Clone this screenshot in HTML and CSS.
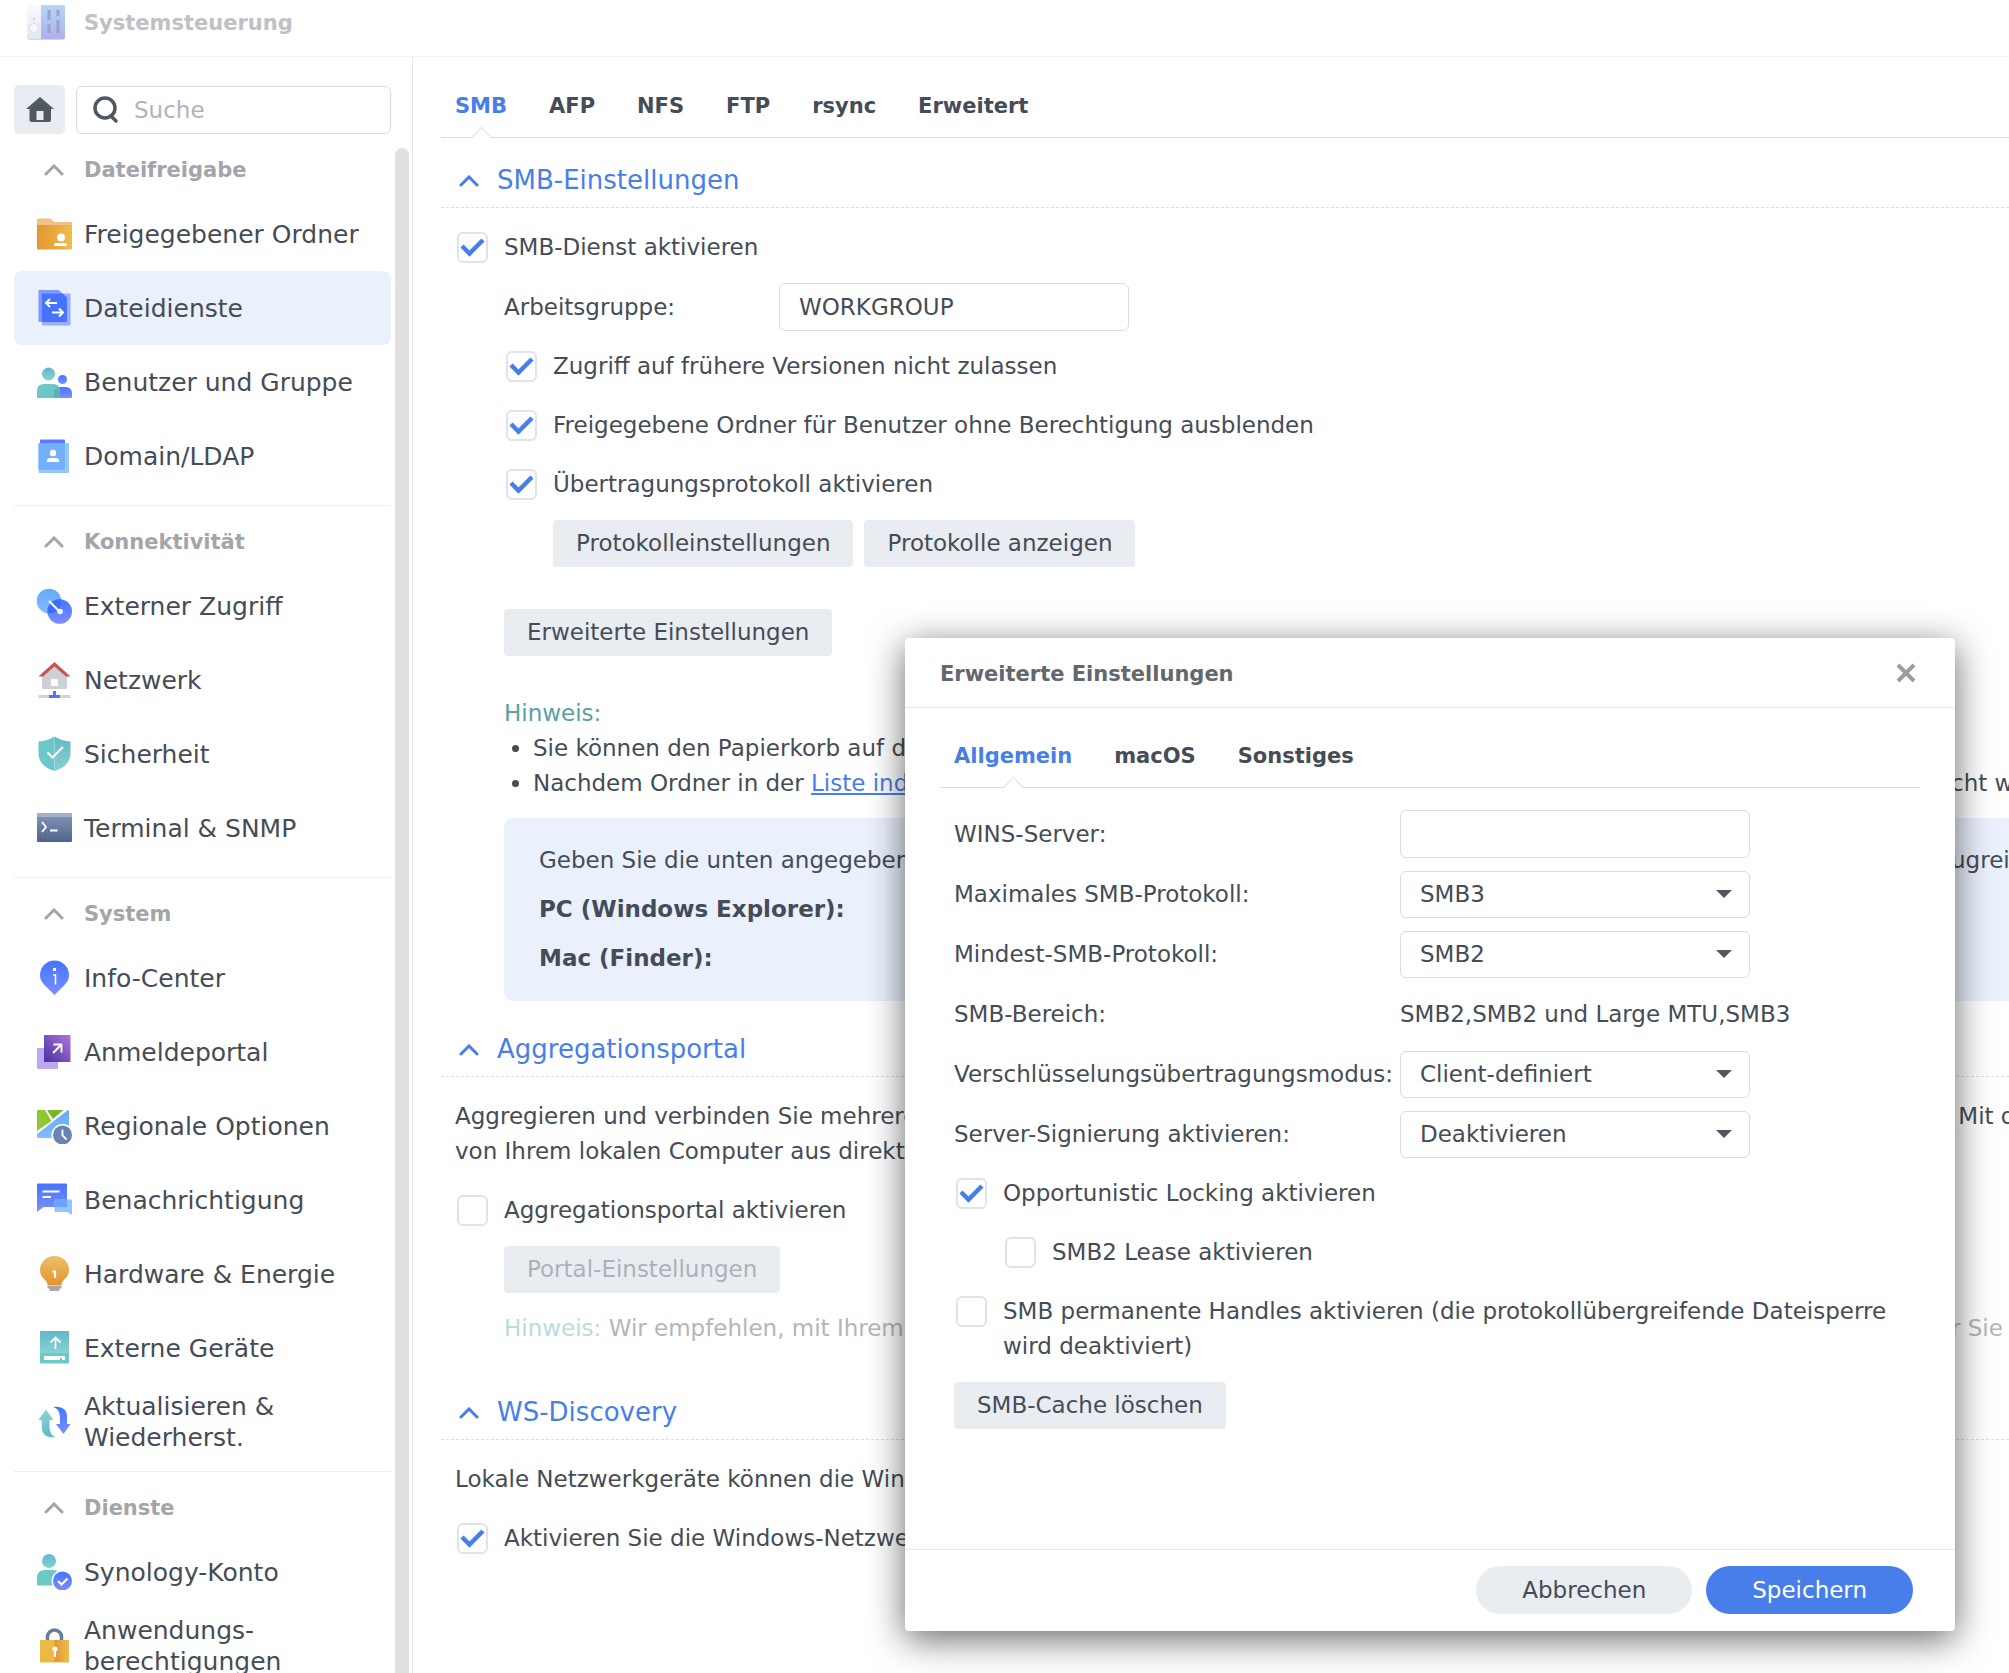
FILE: index.html
```html
<!DOCTYPE html>
<html lang="de">
<head>
    <meta charset="UTF-8">
    <meta name="viewport" content="width=device-width, initial-scale=1.0">
    <title>Systemsteuerung</title>
    <link rel="stylesheet" href="styles.css">
</head>
<body>
    <!-- shared gradients for the icons -->
    <svg class="defs" width="0" height="0" aria-hidden="true">
        <defs>
            <linearGradient id="blue" x1="0" y1="0" x2="0" y2="1"><stop offset="0" stop-color="#4674ff"/><stop offset="1" stop-color="#7b8fff"/></linearGradient>
            <linearGradient id="sky" x1="0" y1="0" x2="0" y2="1"><stop offset="0" stop-color="#64a8f8"/><stop offset="1" stop-color="#84bcff"/></linearGradient>
            <linearGradient id="teal" x1="0" y1="0" x2="0" y2="1"><stop offset="0" stop-color="#62b8c8"/><stop offset="1" stop-color="#86d2d0"/></linearGradient>
            <linearGradient id="tealUp" x1="0" y1="0" x2="0" y2="1"><stop offset="0" stop-color="#8ad5d0"/><stop offset="1" stop-color="#62b8c8"/></linearGradient>
            <linearGradient id="orange" x1="0" y1="0" x2="1" y2="0"><stop offset="0" stop-color="#e39632"/><stop offset="1" stop-color="#efbc4c"/></linearGradient>
            <linearGradient id="bulb" x1="0" y1="0" x2="0" y2="1"><stop offset="0" stop-color="#edc167"/><stop offset="1" stop-color="#e39230"/></linearGradient>
            <linearGradient id="slate" x1="0" y1="0" x2="0" y2="1"><stop offset="0" stop-color="#8697b9"/><stop offset="1" stop-color="#4e648a"/></linearGradient>
            <linearGradient id="purple" x1="0" y1="1" x2="1" y2="0"><stop offset="0" stop-color="#4530a8"/><stop offset="1" stop-color="#b077d4"/></linearGradient>
            <linearGradient id="panel" x1="0" y1="0" x2="0" y2="1"><stop offset="0" stop-color="#b4d6f3"/><stop offset="1" stop-color="#b0b0ee"/></linearGradient>
            <linearGradient id="knob" x1="0" y1="0" x2="0" y2="1"><stop offset="0" stop-color="#f9f9ff"/><stop offset="1" stop-color="#e6e6f0"/></linearGradient>
        </defs>
    </svg>

    <div class="app">
        <header class="titlebar">
            <svg class="app-icon" viewBox="0 0 38 36">
                <rect x="0" y="2" width="38" height="33" rx="3" fill="#d4d4de"/>
                <path d="M2 0h12v34H2a2 2 0 0 1-2-2V2a2 2 0 0 1 2-2z" fill="url(#knob)"/>
                <path d="M14 0h22a2 2 0 0 1 2 2v30a2 2 0 0 1-2 2H14z" fill="url(#panel)"/>
                <circle cx="7" cy="14" r="1" fill="#c3c3cf"/>
                <circle cx="7" cy="23" r="4.5" fill="#f7f7ff" stroke="#dedee9"/>
                <path d="M22 5v23M31 5v23" stroke="#98a2c6" stroke-width="3"/>
                <circle cx="22" cy="17" r="2.5" fill="#a9c6f2"/>
                <circle cx="31" cy="13" r="2.5" fill="#a9c6f2"/>
            </svg>
            <h1>Systemsteuerung</h1>
        </header>

        <div class="window">
            <aside class="sidebar">
                <div class="search-row">
                    <button type="button" class="home-btn" aria-label="Startseite">
                        <svg viewBox="0 0 28 26" width="28" height="26"><path fill-rule="evenodd" d="M14 0l14 12h-3v11a2 2 0 0 1-2 2H5.500a2 2 0 0 1-2-2V12H0zM10.500 14v9h7v-9z" fill="#505862"/></svg>
                    </button>
                    <div class="search-box">
                        <svg viewBox="0 0 26 28" width="26" height="28"><circle cx="12" cy="12" r="10" fill="none" stroke="#505862" stroke-width="3.500"/><path d="M18 20l5 5" stroke="#505862" stroke-width="3.500" stroke-linecap="round"/></svg>
                        <input type="search" class="search-input" placeholder="Suche" aria-label="Suche">
                    </div>
                </div>

                <div class="sidebar-body">
                    <nav class="menu">
                        <section class="menu-group">
                            <h2 class="menu-title"><span class="icon"><svg class="chevron" viewBox="0 0 20 12"><path d="M2 10l8-8 8 8"/></svg></span>Dateifreigabe</h2>
                            <a href="#" class="menu-item">
                                <svg class="icon" viewBox="0 0 36 36"><path d="M1 12V3.500Q1 2.500 2 2.500h12q1 0 2 1.500l2 2h17q1 0 1 1v5z" fill="#efc186"/><path d="M1 9h35v23.500q0 1-1 1H2q-1 0-1-1z" fill="url(#orange)"/><circle cx="25" cy="21.500" r="4" fill="#fff"/><path d="M18 30v-1q0-2 2-2h9q2 0 2 2v1z" fill="#fff"/></svg>
                                Freigegebener Ordner
                            </a>
                            <a href="#" class="menu-item active">
                                <svg class="icon" viewBox="0 0 36 36"><path d="M3.500 0h19l8.500 7v25H3.500q-1 0-1-1V1q0-1 1-1z" fill="#7f98fb"/><path d="M6 3.500h28q.5 0 .5 1V34q0 1.500-1 1.500H7q-1 0-1-1z" fill="#9cadfa"/><path d="M6 3.500h20.500L31 7.500v23.500q0 1-1 1H6z" fill="#4672fc"/><path d="M21 13H10m4-4l-4 4 4 4M16 22.500h11m-4-4l4 4-4 4" fill="none" stroke="#fff" stroke-width="2"/></svg>
                                Dateidienste
                            </a>
                            <a href="#" class="menu-item">
                                <svg class="icon" viewBox="0 0 36 36"><circle cx="12.500" cy="10" r="6.500" fill="url(#teal)"/><circle cx="26.500" cy="15.500" r="4.500" fill="url(#blue)"/><path d="M18 34v-5q0-6 6-6h5q7 0 7 7v3q0 1-1 1z" fill="url(#blue)"/><path d="M1 33v-6q0-7 7-7h9q7 0 7 7v7H2q-1 0-1-1z" fill="#6bc7c8"/><path d="M24 34v-11q-6 0-6 6v5z" fill="#5ab4b4"/></svg>
                                Benutzer und Gruppe
                            </a>
                            <a href="#" class="menu-item">
                                <svg class="icon" viewBox="0 0 36 36"><rect x="4" y="1.500" width="25" height="6" rx="1" fill="#5a7bff"/><rect x="2.500" y="5" width="30.500" height="30" rx="1" fill="#98c6fd"/><rect x="2.500" y="5" width="26.500" height="27" rx="1" fill="#73b1fc"/><circle cx="17" cy="15" r="3.200" fill="#fff"/><path d="M11 24v-1q0-3 3-3h6q3 0 3 3v1z" fill="#fff"/></svg>
                                Domain/LDAP
                            </a>
                        </section>

                        <section class="menu-group">
                            <h2 class="menu-title"><span class="icon"><svg class="chevron" viewBox="0 0 20 12"><path d="M2 10l8-8 8 8"/></svg></span>Konnektivität</h2>
                            <a href="#" class="menu-item">
                                <svg class="icon" viewBox="0 0 36 36"><circle cx="13" cy="13" r="12.300" fill="url(#sky)"/><circle cx="23.700" cy="23.500" r="12.300" fill="url(#blue)"/><path d="M11.700 20.500A12.300 12.300 0 0 1 25.300 11.300A12.300 12.300 0 0 1 11.500 25.200z" fill="#3f6df7"/><path d="M13 13l11 11" stroke="#fff" stroke-width="2"/><circle cx="24" cy="23.500" r="2.800" fill="#fff"/></svg>
                                Externer Zugriff
                            </a>
                            <a href="#" class="menu-item">
                                <svg class="icon" viewBox="0 0 36 36"><path d="M6 11L18.500 2 31 11v14.500q0 1.500-1.500 1.500h-22Q6 27 6 25.500z" fill="#cdd0d6"/><rect x="15" y="17" width="7" height="7" rx="1" fill="#fff"/><path d="M2.500 14.500L18.500 0l16 14.500h-4.500L18.500 4.500 7 14.500z" fill="#c4574b"/><rect x="2.500" y="33" width="32" height="3" fill="#d2d4dc"/><path d="M17 29h3v4h4v3H13v-3h4z" fill="#4f76fb"/></svg>
                                Netzwerk
                            </a>
                            <a href="#" class="menu-item">
                                <svg class="icon" viewBox="0 0 36 36"><path d="M18.500.5Q11 5 2.500 5.500V17c0 10 7 15 16 18z" fill="#6cc8c8"/><path d="M18.500.5Q26 5 34.500 5.500V17c0 10-7 15-16 18z" fill="url(#teal)"/><path d="M11.500 16.500l5 5L27 11" fill="none" stroke="#fff" stroke-width="2"/></svg>
                                Sicherheit
                            </a>
                            <a href="#" class="menu-item">
                                <svg class="icon" viewBox="0 0 36 36"><rect x="1" y="3" width="35" height="29" rx="1" fill="url(#slate)"/><path d="M1 7V4q0-1 1-1h33q1 0 1 1v3z" fill="#a2b0cc"/><path d="M6 12l4 5-4 5M14 20.500h7.500" fill="none" stroke="#fff" stroke-width="1.800"/></svg>
                                Terminal &amp; SNMP
                            </a>
                        </section>

                        <section class="menu-group">
                            <h2 class="menu-title"><span class="icon"><svg class="chevron" viewBox="0 0 20 12"><path d="M2 10l8-8 8 8"/></svg></span>System</h2>
                            <a href="#" class="menu-item">
                                <svg class="icon" viewBox="0 0 36 36"><path d="M18.500.5A14.500 14.500 0 0 1 33 15c0 6-3.500 9-7 12.500L18.500 35 11 27.500C7.500 24 4 21 4 15A14.500 14.500 0 0 1 18.500.5z" fill="url(#blue)"/><rect x="17" y="8" width="3" height="3" fill="#fff"/><path d="M17 15h2.500v9.500" fill="none" stroke="#fff" stroke-width="1.500"/></svg>
                                Info-Center
                            </a>
                            <a href="#" class="menu-item">
                                <svg class="icon" viewBox="0 0 36 36"><rect x="1" y="14" width="21" height="21" rx="1" fill="#bda8f2"/><rect x="8" y="1" width="26.500" height="27" rx="1" fill="url(#purple)"/><path d="M17 19l8-8M17.500 10.500h8v8" fill="none" stroke="#fff" stroke-width="1.800"/></svg>
                                Anmeldeportal
                            </a>
                            <a href="#" class="menu-item">
                                <svg class="icon" viewBox="0 0 36 36"><path d="M1 23V3q0-1 1-1h7l6.500 11z" fill="#8fc731"/><path d="M11 2h16.500L17 11z" fill="#77b52a"/><path d="M32 2q1 0 1 1v27H2q-1 0-1-1v-3z" fill="url(#sky)"/><circle cx="26.500" cy="27" r="11" fill="#fff"/><circle cx="26.500" cy="27" r="9.500" fill="#6884b2"/><path d="M26.500 21.500v6l4 4" fill="none" stroke="#fff" stroke-width="1.800"/></svg>
                                Regionale Optionen
                            </a>
                            <a href="#" class="menu-item">
                                <svg class="icon" viewBox="0 0 36 36"><path d="M2 1.500h28q1 0 1 1V25H7.500L1 30V2.500q0-1 1-1z" fill="url(#blue)"/><path d="M18.500 17.500h16.500q1 0 1 1V33l-5-3H19.500q-1 0-1-1z" fill="#93c4fd"/><path d="M18.500 17.500H31V25H18.500z" fill="#6ba4fb"/><path d="M6.500 9.500h17M6.500 15H15" stroke="#fff" stroke-width="1.800"/></svg>
                                Benachrichtigung
                            </a>
                            <a href="#" class="menu-item">
                                <svg class="icon" viewBox="0 0 36 36"><path d="M11.500 29.500v-1C11.500 24 4 22 4 14A14.500 14 0 0 1 33 14c0 8-7.500 10-7.500 14.500v1z" fill="url(#bulb)"/><path d="M11.500 30h14v2.500h-2V35h-10v-2.500h-2z" fill="#a4a9b2"/><path d="M16.500 15.500h2.500V22" fill="none" stroke="#fff" stroke-width="2.200"/></svg>
                                Hardware &amp; Energie
                            </a>
                            <a href="#" class="menu-item">
                                <svg class="icon" viewBox="0 0 36 36"><rect x="4" y="1" width="29" height="32.500" rx="1" fill="#6cc9c8"/><path d="M4 23V2q0-1 1-1h27q1 0 1 1v21z" fill="url(#teal)"/><path d="M19.500 19V7.500m-5 5l5-5 5 5" fill="none" stroke="#fff" stroke-width="1.800"/><path d="M8 26h21v4H8z" fill="#fff"/><rect x="24" y="28" width="2" height="2" fill="#6cc9c8"/></svg>
                                Externe Geräte
                            </a>
                            <a href="#" class="menu-item">
                                <svg class="icon" viewBox="0 0 36 36"><path d="M10 5.500l7.500 10.500h-4v6c0 6 2 10 6.500 11-8 1.500-14-2-14-9v-8H2.500z" fill="url(#tealUp)"/><path d="M27.500 30L20 20h4v-5c0-7-2-10.500-7-12 8-1.500 14 2 14 9v8h3.500z" fill="url(#blue)"/></svg>
                                <span>Aktualisieren &amp;<br>Wiederherst.</span>
                            </a>
                        </section>

                        <section class="menu-group">
                            <h2 class="menu-title"><span class="icon"><svg class="chevron" viewBox="0 0 20 12"><path d="M2 10l8-8 8 8"/></svg></span>Dienste</h2>
                            <a href="#" class="menu-item">
                                <svg class="icon" viewBox="0 0 36 36"><circle cx="13" cy="7" r="7" fill="url(#teal)"/><path d="M1 30.500V24q0-8 8-8h8q8 0 8 8v7.500H2q-1 0-1-1z" fill="#6bc9c8"/><circle cx="26.500" cy="27" r="11" fill="#fff"/><circle cx="26.500" cy="27" r="9.500" fill="url(#blue)"/><path d="M22 27l3.500 3.500 6-6" fill="none" stroke="#fff" stroke-width="2"/></svg>
                                Synology-Konto
                            </a>
                            <a href="#" class="menu-item">
                                <svg class="icon" viewBox="0 0 36 36"><path d="M11.500 14V9a7 7 0 0 1 14 0v5" fill="none" stroke="#667ca3" stroke-width="3.500"/><rect x="4" y="12" width="29" height="22.500" rx="1" fill="#edb945"/><path d="M18.500 12H32q1 0 1 1v21H18.500z" fill="url(#orange)"/><circle cx="19" cy="21" r="2.600" fill="#fff"/><path d="M19 21v8" stroke="#fff" stroke-width="2"/></svg>
                                <span>Anwendungs-<br>berechtigungen</span>
                            </a>
                        </section>
                    </nav>
                    <div class="scrollbar"></div>
                </div>
            </aside>

            <main class="content">
                <nav class="tabs">
                    <a href="#" class="tab active">SMB</a>
                    <a href="#" class="tab">AFP</a>
                    <a href="#" class="tab">NFS</a>
                    <a href="#" class="tab">FTP</a>
                    <a href="#" class="tab">rsync</a>
                    <a href="#" class="tab">Erweitert</a>
                </nav>

                <section class="panel">
                    <h2 class="panel-title"><svg class="chevron" viewBox="0 0 20 12"><path d="M2 10l8-8 8 8"/></svg>SMB-Einstellungen</h2>
                    <div class="panel-body">
                        <label class="check"><input type="checkbox" checked><span>SMB-Dienst aktivieren</span></label>
                        <div class="indent">
                            <div class="field">
                                <label for="workgroup">Arbeitsgruppe:</label>
                                <input type="text" id="workgroup" class="text-input" value="WORKGROUP">
                            </div>
                            <label class="check"><input type="checkbox" checked><span>Zugriff auf frühere Versionen nicht zulassen</span></label>
                            <label class="check"><input type="checkbox" checked><span>Freigegebene Ordner für Benutzer ohne Berechtigung ausblenden</span></label>
                            <label class="check"><input type="checkbox" checked><span>Übertragungsprotokoll aktivieren</span></label>
                            <div class="indent buttons">
                                <button type="button" class="btn">Protokolleinstellungen</button>
                                <button type="button" class="btn">Protokolle anzeigen</button>
                            </div>
                            <div class="buttons advanced">
                                <button type="button" class="btn">Erweiterte Einstellungen</button>
                            </div>
                            <div class="note">
                                <p class="hint">Hinweis:</p>
                                <ul>
                                    <li><p class="line"><span>Sie können den Papierkorb auf der Seite Freigegebener Ordner leeren.</span></p></li>
                                    <li><p class="line"><span>Nachdem Ordner in der <a href="#">Liste indizierter Ordner</a> hinzugefügt wurden, kann Spotlight ni</span><span>cht wirken.</span></p></li>
                                </ul>
                            </div>
                            <div class="info-box">
                                <p class="line"><span>Geben Sie die unten angegebene Adresse ein, um auf freigegebene Ordner zuz</span><span>ugreifen.</span></p>
                                <p><strong>PC (Windows Explorer):</strong></p>
                                <p><strong>Mac (Finder):</strong></p>
                            </div>
                        </div>
                    </div>
                </section>

                <section class="panel">
                    <h2 class="panel-title"><svg class="chevron" viewBox="0 0 20 12"><path d="M2 10l8-8 8 8"/></svg>Aggregationsportal</h2>
                    <div class="panel-body">
                        <div class="text">
                            <p class="line"><span>Aggregieren und verbinden Sie mehrere freigegebene Ordner auf anderen Servern.</span><span>&nbsp;Mit dem Portal</span></p>
                            <p class="line"><span>von Ihrem lokalen Computer aus direkt darauf zugreifen.</span></p>
                        </div>
                        <label class="check"><input type="checkbox"><span>Aggregationsportal aktivieren</span></label>
                        <div class="indent">
                            <div class="buttons">
                                <button type="button" class="btn" disabled>Portal-Einstellungen</button>
                            </div>
                            <p class="line text disabled"><span><span class="hint">Hinweis:</span> Wir empfehlen, mit Ihrem Konto eine Verbindung aufzubauen, bevo</span><span>r Sie fortfahren</span></p>
                        </div>
                    </div>
                </section>

                <section class="panel">
                    <h2 class="panel-title"><svg class="chevron" viewBox="0 0 20 12"><path d="M2 10l8-8 8 8"/></svg>WS-Discovery</h2>
                    <div class="panel-body">
                        <p class="line text"><span>Lokale Netzwerkgeräte können die Windows-Netzwerkerkennung verwenden.</span></p>
                        <label class="check"><input type="checkbox" checked><span>Aktivieren Sie die Windows-Netzwerkerkennung</span></label>
                    </div>
                </section>
            </main>
        </div>

        <div class="dialog" role="dialog" aria-labelledby="dialog-title">
            <header class="dialog-header">
                <h2 id="dialog-title">Erweiterte Einstellungen</h2>
                <button type="button" class="close-btn" aria-label="Schließen">
                    <svg viewBox="0 0 20 20" width="20" height="20"><path d="M2 2l16 16M18 2L2 18" stroke="#9a9da3" stroke-width="4"/></svg>
                </button>
            </header>
            <div class="dialog-body">
                <nav class="tabs">
                    <a href="#" class="tab active">Allgemein</a>
                    <a href="#" class="tab">macOS</a>
                    <a href="#" class="tab">Sonstiges</a>
                </nav>
                <form class="dialog-form">
                    <div class="field">
                        <label for="wins">WINS-Server:</label>
                        <input type="text" id="wins" class="text-input">
                    </div>
                    <div class="field">
                        <label for="max-smb">Maximales SMB-Protokoll:</label>
                        <span class="select"><select id="max-smb"><option>SMB3</option></select></span>
                    </div>
                    <div class="field">
                        <label for="min-smb">Mindest-SMB-Protokoll:</label>
                        <span class="select"><select id="min-smb"><option>SMB2</option></select></span>
                    </div>
                    <div class="field">
                        <span>SMB-Bereich:</span>
                        <span>SMB2,SMB2 und Large MTU,SMB3</span>
                    </div>
                    <div class="field">
                        <label for="encryption">Verschlüsselungsübertragungsmodus:</label>
                        <span class="select"><select id="encryption"><option>Client-definiert</option></select></span>
                    </div>
                    <div class="field">
                        <label for="signing">Server-Signierung aktivieren:</label>
                        <span class="select"><select id="signing"><option>Deaktivieren</option></select></span>
                    </div>
                    <label class="check"><input type="checkbox" checked><span>Opportunistic Locking aktivieren</span></label>
                    <div class="indent">
                        <label class="check"><input type="checkbox"><span>SMB2 Lease aktivieren</span></label>
                    </div>
                    <label class="check"><input type="checkbox"><span>SMB permanente Handles aktivieren (die protokollübergreifende Dateisperre wird deaktiviert)</span></label>
                    <div class="buttons">
                        <button type="button" class="btn">SMB-Cache löschen</button>
                    </div>
                </form>
            </div>
            <footer class="dialog-footer">
                <button type="button" class="btn pill">Abbrechen</button>
                <button type="button" class="btn pill primary">Speichern</button>
            </footer>
        </div>
    </div>
</body>
</html>
```

FILE: styles.css
```css
* {
    box-sizing: border-box;
}
body {
    margin: 0;
    background-color: #fff;
    color: #454c56;
    font-family: "DejaVu Sans", Verdana, sans-serif;
    font-size: 23px;
    line-height: 35px;
}
h1, h2, p, ul {
    margin: 0;
    padding: 0;
}
button, input, select {
    font: inherit;
    color: inherit;
}
a {
    color: #477ee9;
}
.defs {
    position: absolute;
}
.app {
    display: flex;
    flex-direction: column;
    height: 100vh;
    overflow: hidden;
    position: relative;
}

/* title bar */
.titlebar {
    display: flex;
    align-items: center;
    gap: 19px;
    flex: none;
    height: 57px;
    padding: 0 27px 10px;
    border-bottom: 1px solid #f2f3f6;
}
.titlebar h1 {
    font-size: 21px;
    color: #c0c1c5;
}
.app-icon {
    width: 38px;
    height: 36px;
}
.window {
    display: flex;
    flex: 1;
    min-height: 0;
}

/* sidebar */
.sidebar {
    display: flex;
    flex-direction: column;
    flex: none;
    width: 413px;
    padding: 28px 3px 0 14px;
    border-right: 1px solid #e3e7ef;
}
.search-row {
    display: flex;
    align-items: flex-end;
    gap: 11px;
    padding-right: 18px;
}
.home-btn {
    display: flex;
    align-items: center;
    justify-content: center;
    width: 51px;
    height: 49px;
    padding: 0;
    border: 0;
    border-radius: 5px;
    background-color: #e9edf2;
}
.search-box {
    display: flex;
    align-items: center;
    gap: 15px;
    flex: 1;
    height: 48px;
    padding: 0 16px;
    border: 1px solid #d5dde8;
    border-radius: 6px;
}
.search-box svg {
    flex: none;
}
.search-input {
    width: 100%;
    min-width: 0;
    padding: 0;
    border: 0;
    outline: 0;
    background: none;
}
.search-input::placeholder {
    color: #b0b4ba;
}
.sidebar-body {
    display: flex;
    flex: 1;
    gap: 4px;
    min-height: 0;
}
.menu {
    flex: 1;
    overflow: hidden;
}
.scrollbar {
    width: 14px;
    margin-top: 14px;
    border-radius: 7px 7px 0 0;
    background-color: #e0e0e0;
}
.menu-group {
    padding-bottom: 12px;
    border-bottom: 1px solid #ebedf0;
}
.menu-title, .menu-item {
    display: flex;
    align-items: center;
    gap: 12px;
    padding-left: 22px;
}
.menu-title {
    height: 63px;
    padding-top: 9px;
    font-size: 21px;
    color: #a2a5aa;
}
.menu-item {
    height: 74px;
    border-radius: 8px;
    font-size: 25px;
    line-height: 31px;
    color: #454c56;
    text-decoration: none;
    white-space: nowrap;
}
.menu-item.active {
    background-color: #eaf1fd;
}
.icon {
    display: flex;
    align-items: center;
    justify-content: center;
    flex: none;
    width: 36px;
    height: 36px;
}
.chevron {
    width: 20px;
    height: 12px;
    fill: none;
    stroke: currentColor;
    stroke-width: 3;
    stroke-linecap: round;
}

/* main area */
.content {
    flex: 1;
    min-width: 0;
    padding: 30px 0 0 28px;
}
.tabs {
    display: flex;
    gap: 42px;
    padding-left: 14px;
    border-bottom: 1px solid #d9dfe9;
    font-size: 21px;
    font-weight: bold;
}
.tab {
    position: relative;
    padding: 2px 0 13px;
    color: #454c56;
    text-decoration: none;
}
.tab.active {
    color: #477ee9;
}
.tab.active::after {
    content: "";
    position: absolute;
    left: 50%;
    bottom: -8px;
    width: 14px;
    height: 14px;
    margin-left: -7px;
    border: 1px solid #d9dfe9;
    border-right: 0;
    border-bottom: 0;
    background: linear-gradient(135deg, #fff 60%, transparent 60%);
    transform: rotate(45deg);
}
.panel {
    padding-bottom: 22px;
}
.tabs + .panel {
    padding-top: 16px;
}
.panel-title {
    display: flex;
    align-items: center;
    gap: 18px;
    padding-left: 18px;
    border-bottom: 1px dashed #d9dfe6;
    font-size: 26px;
    font-weight: normal;
    line-height: 53px;
    color: #477ee9;
}
.panel-body, .indent, .dialog-form {
    display: flex;
    flex-direction: column;
    gap: 12px;
}
.panel-body {
    padding: 16px 0 0 14px;
}
.indent {
    padding-left: 49px;
}
.check {
    display: flex;
    align-items: flex-start;
    gap: 16px;
    padding: 6px 0;
}
.check input {
    appearance: none;
    flex: none;
    width: 31px;
    height: 31px;
    margin: 2px 0 0 2px;
    border: 2px solid #dee4ec;
    border-radius: 6px;
    background: #fff;
}
.check input:checked {
    background: #fff url("data:image/svg+xml,%3Csvg xmlns='http://www.w3.org/2000/svg' viewBox='0 0 27 27'%3E%3Cpath d='M3 12l7.500 7.500L24 6' fill='none' stroke='%23477ee9' stroke-width='4.500'/%3E%3C/svg%3E") center / 27px no-repeat;
}
.field {
    display: flex;
    align-items: center;
    min-height: 48px;
}
.field > :first-child {
    flex: none;
    width: 275px;
}
.text-input, .select {
    width: 350px;
}
.text-input {
    height: 48px;
    padding: 0 19px;
    border: 1px solid #d5dde8;
    border-radius: 6px;
    background-color: #fff;
}
.select {
    position: relative;
}
.select::after {
    content: "";
    position: absolute;
    right: 18px;
    top: 19px;
    border: 8px solid transparent;
    border-top-color: #505862;
    border-bottom: 0;
}
.select select {
    appearance: none;
    display: block;
    width: 100%;
    height: 47px;
    padding: 0 19px;
    border: 1px solid #d5dde8;
    border-radius: 6px;
    background-color: #fff;
}
.buttons {
    display: flex;
    flex-direction: row;
    gap: 11px;
}
.btn {
    height: 47px;
    padding: 0 23px;
    border: 0;
    border-radius: 4px;
    background-color: #e9edf2;
}
.btn:disabled {
    color: #adb1b7;
}
.advanced {
    margin-top: 30px;
}
.note {
    margin-top: 28px;
}
.hint {
    color: #56a2a5;
}
.note ul {
    padding-left: 29px;
}
.line {
    display: grid;
    grid-template-columns: 1fr 58px;
    white-space: nowrap;
}
.line > span {
    min-width: 0;
    overflow: hidden;
}
.info-box {
    margin-top: 5px;
    padding: 18px 0 18px 35px;
    border-radius: 9px 0 0 9px;
    background-color: #eaf1fd;
    line-height: 49px;
}
.text {
    padding: 6px 0;
}
.disabled {
    padding-bottom: 18px;
    color: #b3b6bb;
}
.disabled .hint {
    color: #bbdadb;
}

/* dialog */
.dialog {
    position: absolute;
    top: 638px;
    right: 54px;
    width: 1050px;
    max-width: 90%;
    border-radius: 4px;
    background-color: #fff;
    box-shadow: 0 8px 36px rgba(0, 0, 0, 0.6);
}
.dialog-header {
    display: flex;
    align-items: center;
    justify-content: space-between;
    height: 70px;
    padding: 0 39px 0 35px;
    border-bottom: 1px solid #e5e8ec;
}
.dialog-header h2 {
    padding-top: 3px;
    font-size: 21px;
    color: #626770;
}
.close-btn {
    display: flex;
    padding: 0;
    border: 0;
    background: none;
}
.dialog-body {
    padding: 29px 35px 120px;
}
.dialog-form {
    padding: 22px 14px 0;
}
.dialog-form .field > :first-child {
    width: 446px;
}
.dialog-footer {
    display: flex;
    justify-content: flex-end;
    gap: 14px;
    padding: 16px 42px 17px;
    border-top: 1px solid #e5e8ec;
}
.pill {
    height: 48px;
    padding: 0 46px;
    border-radius: 24px;
}
.primary {
    background-color: #477ee9;
    color: #fff;
}
```
